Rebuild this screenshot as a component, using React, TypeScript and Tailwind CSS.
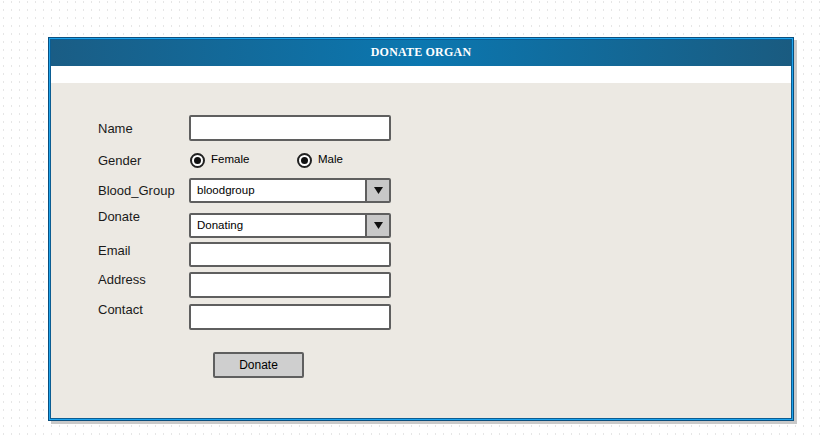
const sans = { fontFamily: '"Liberation Sans", Arial, sans-serif' };
const sketch = { fontFamily: '"Liberation Sans", Arial, sans-serif' };

function TextBox() {
  return <div className="w-[202px] h-full bg-white border-2 border-[#5f5f5f] rounded-[2px]" />;
}

function Select({ value }: { value: string }) {
  return (
    <div className="w-[202px] h-full flex bg-white border-2 border-[#5f5f5f] rounded-[2px]">
      <div className="flex-1 flex items-center pl-[6px] text-[11.5px] text-black" style={sketch}>
        {value}
      </div>
      <div className="w-[24px] flex items-center justify-center bg-[#c8c8c8] border-l-2 border-[#5f5f5f]">
        <svg width="9" height="7" viewBox="0 0 9 7">
          <polygon points="0,0 9,0 4.5,7" fill="#111" />
        </svg>
      </div>
    </div>
  );
}

function Radio({ label }: { label: string }) {
  return (
    <div className="flex items-center gap-[6px]">
      <div className="w-[15px] h-[15px] rounded-full border-2 border-[#222] bg-white flex items-center justify-center">
        <div className="w-[7px] h-[7px] rounded-full bg-[#111]" />
      </div>
      <span className="text-[11.5px] text-black" style={sketch}>
        {label}
      </span>
    </div>
  );
}

function Label({ children, className = "" }: { children: string; className?: string }) {
  return (
    <div className={`w-[91px] text-[13px] leading-[15px] text-[#1a1a1a] ${className}`} style={sans}>
      {children}
    </div>
  );
}

export default function App() {
  return (
    <div className="w-[821px] h-[436px] overflow-hidden bg-white bg-[radial-gradient(ellipse_0.8px_1.2px_at_3.5px_2px,#e6e6e6_90%,transparent_100%)] bg-[length:8px_8px] pt-[37px] pl-[48px]">
      <div className="w-[746px] h-[384px] border border-[#0a4f7e] bg-[#1ea4ee] p-px shadow-[3px_3px_0_#c9c9c9]">
        <div className="h-full border border-[#0b5d92] flex flex-col">
          <div className="h-[26px] bg-[linear-gradient(to_right,#1a5d85,#0b77b0_50%,#1a5b80)] flex items-center justify-center">
            <span
              className="text-white text-[12px] font-bold tracking-[0.2px] -mt-[2px]"
              style={{ fontFamily: '"Liberation Serif", "Times New Roman", serif' }}
            >
              DONATE ORGAN
            </span>
          </div>
          <div className="h-[17px] bg-white" />
          <div className="flex-1 bg-[#ece9e3] pl-[47px] flex flex-col">
            <div className="mt-[32px] h-[26px] flex items-center">
              <Label>Name</Label>
              <TextBox />
            </div>
            <div className="mt-[7px] h-[24px] flex items-center">
              <Label>Gender</Label>
              <div className="flex items-center pl-[1px]">
                <div className="w-[107px]">
                  <Radio label="Female" />
                </div>
                <Radio label="Male" />
              </div>
            </div>
            <div className="mt-[6px] h-[25px] flex items-center">
              <Label>Blood_Group</Label>
              <Select value="bloodgroup" />
            </div>
            <div className="mt-[10px] h-[25px] flex items-start">
              <Label className="-mt-[4px]">Donate</Label>
              <Select value="Donating" />
            </div>
            <div className="mt-[4px] h-[25px] flex items-start">
              <Label className="mt-[1px]">Email</Label>
              <TextBox />
            </div>
            <div className="mt-[5px] h-[26px] flex items-start">
              <Label>Address</Label>
              <TextBox />
            </div>
            <div className="mt-[6px] h-[26px] flex items-start">
              <Label className="-mt-[2px]">Contact</Label>
              <TextBox />
            </div>
            <div className="mt-[22px] ml-[115px] w-[91px] h-[26px] bg-[#cfcfcf] border-2 border-[#5f5f5f] rounded-[2px] flex items-center justify-center">
              <span className="text-[12px] text-black" style={sketch}>
                Donate
              </span>
            </div>
          </div>
        </div>
      </div>
    </div>
  );
}
